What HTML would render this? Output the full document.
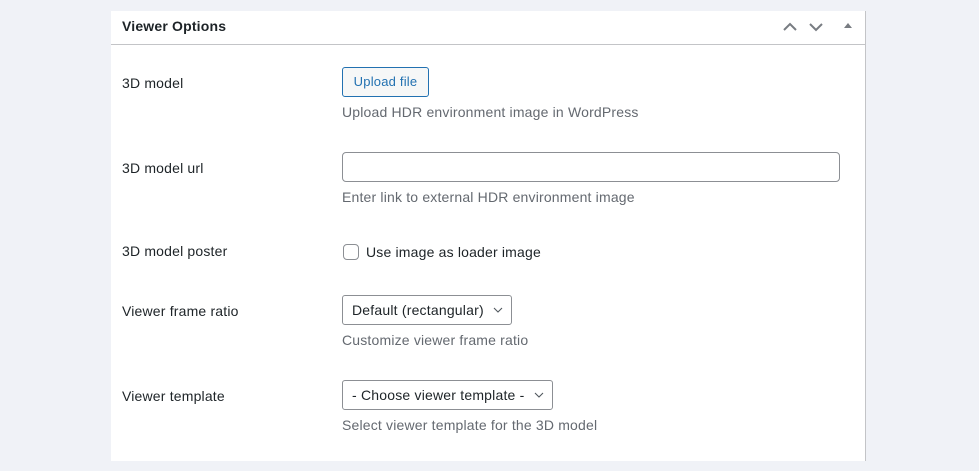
<!DOCTYPE html>
<html><head><style>
body{margin:0;width:979px;height:471px;background:#f0f2f7;font-family:"Liberation Sans",sans-serif;position:relative;overflow:hidden;color:#1d2327}
.p{position:absolute;left:111px;top:11px;width:754px;height:450px;background:#fff;border-right:1px solid #c3c4c7}
.hd{position:absolute;left:0;top:0;width:754px;height:33px;border-bottom:1px solid #c3c4c7}
.a{position:absolute;font-size:14px;line-height:18px;letter-spacing:0.18px}
.lbl{left:122px}
.d{left:342px;color:#646970}
.btn{position:absolute;left:342px;top:67px;width:87px;height:30px;box-sizing:border-box;border:1px solid #2271b1;border-radius:3px;color:#2271b1;background:#f6f7f7;font-size:13px;line-height:28px;text-align:center;letter-spacing:0.2px}
.in{position:absolute;left:342px;top:152px;width:498px;height:30px;box-sizing:border-box;border:1px solid #8c8f94;border-radius:4px}
.sel{position:absolute;left:342px;height:30px;box-sizing:border-box;border:1px solid #8c8f94;border-radius:3px;font-size:14px;line-height:28px;padding-left:9px;letter-spacing:0.2px}
.sel svg{position:absolute;right:8px;top:11px}
.cb{position:absolute;left:343px;top:244px;width:14px;height:14px;border:1px solid #8c8f94;border-radius:4px}
</style></head><body>
<div class="p"><div class="hd"></div></div>
<div class="a" style="left:122px;top:17px;font-weight:bold">Viewer Options</div>
<svg style="position:absolute;left:783px;top:20px" width="70" height="12"><path d="M1 10 L7 4 L13 10" stroke="#787c82" stroke-width="2" fill="none"/><path d="M27 4 L33 10 L39 4" stroke="#787c82" stroke-width="2" fill="none"/><path d="M61 8 L65 3 L69 8Z" fill="#787c82"/></svg>
<div class="a lbl" style="top:74px">3D model</div>
<div class="btn">Upload file</div>
<div class="a d" style="top:103px">Upload HDR environment image in WordPress</div>
<div class="a lbl" style="top:159px">3D model url</div>
<div class="in"></div>
<div class="a d" style="top:188px">Enter link to external HDR environment image</div>
<div class="a lbl" style="top:242px">3D model poster</div>
<div class="cb"></div>
<div class="a" style="left:366px;top:243px">Use image as loader image</div>
<div class="a lbl" style="top:302px">Viewer frame ratio</div>
<div class="sel" style="top:295px;width:170px">Default (rectangular)<svg width="10" height="7"><path d="M1 1 L5 5 L9 1" stroke="#50575e" stroke-width="1.1" fill="none"/></svg></div>
<div class="a d" style="top:331px">Customize viewer frame ratio</div>
<div class="a lbl" style="top:387px">Viewer template</div>
<div class="sel" style="top:380px;width:211px">- Choose viewer template -<svg width="10" height="7"><path d="M1 1 L5 5 L9 1" stroke="#50575e" stroke-width="1.1" fill="none"/></svg></div>
<div class="a d" style="top:416px">Select viewer template for the 3D model</div>
</body></html>
